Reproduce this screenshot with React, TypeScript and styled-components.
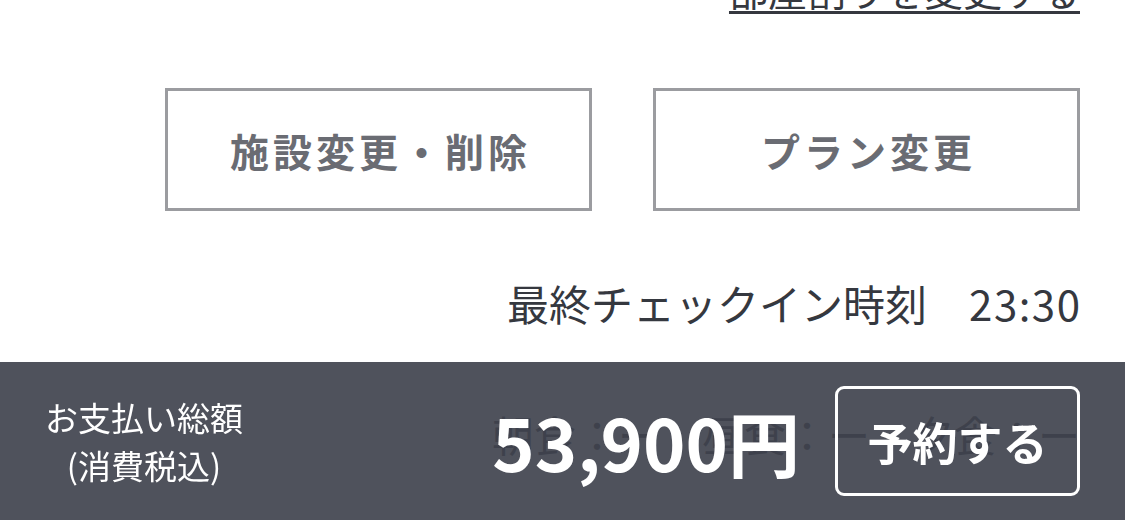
import React from "react";
import styled, { createGlobalStyle } from "styled-components";

const GlobalStyle = createGlobalStyle`
  html, body {
    margin: 0;
    padding: 0;
    background: #ffffff;
    overflow: hidden;
  }
  body {
    font-family: "Noto Sans CJK JP", "Noto Sans", sans-serif;
    color: #35383f;
  }
`;

const Page = styled.div`
  display: flex;
  flex-direction: column;
  align-items: flex-end;
  padding: 0 45px;
  height: 520px;
  box-sizing: border-box;
`;

const ChangeLink = styled.a`
  display: block;
  margin-top: -30px;
  font-size: 39px;
  line-height: 1;
  color: #35383f;
  text-decoration: underline;
  text-decoration-thickness: 3px;
  text-underline-offset: 5px;
  cursor: pointer;
`;

const ButtonRow = styled.div`
  display: flex;
  gap: 61px;
  margin-top: 79px;
`;

const OutlineButton = styled.button`
  width: 427px;
  height: 123px;
  box-sizing: border-box;
  border: 3px solid #9b9ca0;
  background: #ffffff;
  color: #6a6c73;
  font-family: inherit;
  font-size: 39px;
  font-weight: 700;
  letter-spacing: 4px;
  padding: 0 0 0 4px;
  display: flex;
  align-items: center;
  justify-content: center;
  cursor: pointer;
`;

const InfoRow = styled.div<{ $gap: number }>`
  display: flex;
  align-items: center;
  font-size: 42px;
  line-height: 1;
  margin-top: ${(p) => p.$gap}px;
  color: #35383f;
  white-space: nowrap;
`;

const InfoValue = styled.span`
  margin-left: 42px;
  letter-spacing: 1.5px;
  margin-right: -1.5px;
`;

const Footer = styled.footer`
  position: fixed;
  left: 0;
  right: 0;
  bottom: 0;
  height: 158px;
  box-sizing: border-box;
  padding: 0 45px;
  background: rgba(63, 66, 77, 0.917);
  display: flex;
  align-items: center;
`;

const TotalLabel = styled.div`
  color: #ffffff;
  font-size: 33px;
  line-height: 48px;
  text-align: center;
`;

const Price = styled.div`
  margin-left: auto;
  color: #ffffff;
  font-size: 72px;
  font-weight: 700;
  line-height: 1;
  white-space: nowrap;
`;

const ReserveButton = styled.button`
  margin-left: 35px;
  width: 245px;
  height: 110px;
  box-sizing: border-box;
  border: 3px solid #ffffff;
  border-radius: 9px;
  background: transparent;
  color: #ffffff;
  font-family: inherit;
  font-size: 45px;
  font-weight: 700;
  display: flex;
  align-items: center;
  justify-content: center;
  padding: 0;
  cursor: pointer;
`;

export default function App() {
  return (
    <>
      <GlobalStyle />
      <Page>
        <ChangeLink>部屋割りを変更する</ChangeLink>
        <ButtonRow>
          <OutlineButton>施設変更・削除</OutlineButton>
          <OutlineButton>プラン変更</OutlineButton>
        </ButtonRow>
        <InfoRow $gap={71}>
          <span>最終チェックイン時刻</span>
          <InfoValue>23:30</InfoValue>
        </InfoRow>
        <InfoRow $gap={89}>朝食：ー　昼食：ー　夕食：ー</InfoRow>
      </Page>
      <Footer>
        <TotalLabel>
          お支払い総額
          <br />
          (消費税込)
        </TotalLabel>
        <Price>53,900円</Price>
        <ReserveButton>予約する</ReserveButton>
      </Footer>
    </>
  );
}
